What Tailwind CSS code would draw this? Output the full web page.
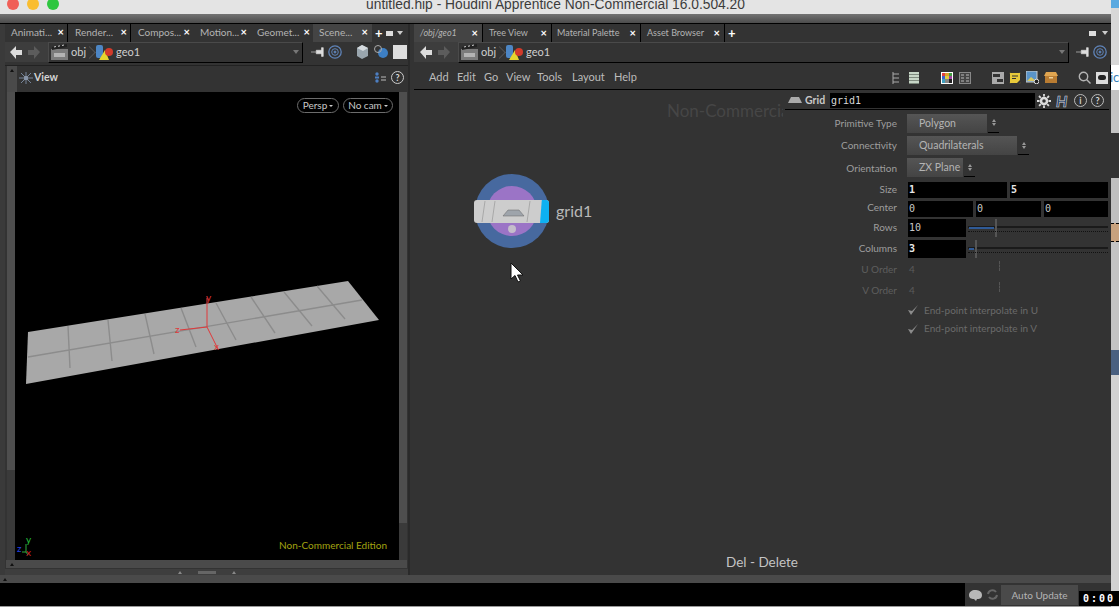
<!DOCTYPE html>
<html lang="en">
<head>
<meta charset="UTF-8">
<title>untitled.hip - Houdini Apprentice Non-Commercial 16.0.504.20</title>
<script src="https://cdn.jsdelivr.net/npm/@tailwindcss/browser@4"></script>
</head>
<body class="relative flex w-[1119px] h-[607px] overflow-hidden bg-[#333] font-['Lato',sans-serif] text-[10px] text-[#b4b4b4]">

<div class="w-[1111px] shrink-0 flex flex-col">
  <!-- mac title bar -->
  <div class="relative h-[14px] bg-[#e4e4e4] overflow-hidden">
    <div class="absolute left-[7px] -top-[2px] flex gap-[8px]">
      <span class="w-[12px] h-[12px] rounded-full bg-[#f05f57]"></span>
      <span class="w-[12px] h-[12px] rounded-full bg-[#f9bd30]"></span>
      <span class="w-[12px] h-[12px] rounded-full bg-[#2ec640]"></span>
    </div>
    <div class="text-center whitespace-nowrap text-[13.8px] leading-[10px] text-[#3c3c3c] font-['Liberation_Sans',sans-serif]">untitled.hip - Houdini Apprentice Non-Commercial 16.0.504.20</div>
  </div>
  <div class="h-[10px] bg-gradient-to-b from-[#747474] to-[#4c4c4c] border-b border-black"></div>

  <div class="flex h-[551px]">
    <!-- left pane -->
    <div class="w-[410px] shrink-0 flex flex-col border-l-[5px] border-l-[#3a3a3a] border-r-2 border-r-[#2a2a2a]">
      <div class="flex items-center h-[18px] whitespace-nowrap">
        <div class="w-[63px] h-full flex items-center justify-between pl-[6px] pr-[3px] pb-[1px] border-r border-black"><span>Animati...</span><b class="text-white text-[11px]">×</b></div>
        <div class="w-[63px] h-full flex items-center justify-between pl-[7px] pr-[3px] pb-[1px] border-r border-black"><span>Render...</span><b class="text-white text-[11px]">×</b></div>
        <div class="w-[62px] h-full flex items-center justify-between pl-[7px] pr-[3px] pb-[1px]"><span>Compos...</span><b class="text-white text-[11px]">×</b></div>
        <div class="w-[57px] h-full flex items-center justify-between pl-[7px] pr-[3px] pb-[1px]"><span>Motion...</span><b class="text-white text-[11px]">×</b></div>
        <div class="w-[63px] h-full flex items-center justify-between pl-[7px] pr-[3px] pb-[1px]"><span>Geomet...</span><b class="text-white text-[11px]">×</b></div>
        <div class="w-[59px] h-full flex items-center justify-between pl-[6px] pr-[4px] pb-[1px] bg-[#444]"><span>Scene...</span><b class="text-white text-[11px]">×</b></div>
        <span class="ml-[3px] text-white text-[13px] font-bold leading-none">+</span>
        <span class="ml-[3px] w-[7px] h-[5px] bg-[#ddd]"></span>
        <span class="ml-[4px] w-0 h-0 border-x-[3px] border-x-transparent border-t-[4px] border-t-[#ccc]"></span>
      </div>
      <!-- path row -->
      <div class="flex items-center h-[20px]">
        <div class="w-[43px] h-full bg-[#3d3d3d] flex items-center">
          <svg class="w-[38px] h-[14px] ml-[4px]" viewBox="0 0 38 14">
            <path d="M1 7l6-6v4h6v5H7v4z" fill="#dcdcdc"/><path d="M31 7l-6-6v4h-6v5h6v4z" fill="#5c5c5c"/>
          </svg>
        </div>
        <div class="w-[255px] h-[21px] shrink-0 flex items-center border border-black border-t-[#4a4a4a] border-l-[#4a4a4a] text-[#cfcfcf] text-[11px]">
          <svg class="w-[17px] h-[16px] ml-[2px]" viewBox="0 0 17 16"><rect y="5" width="17" height="11" fill="#7c7c7c"/><path d="M1 3l15-3v3L1 6z" fill="#222"/><path d="M3 3l2-.5M7 2.300l2-.5M11 1.500l2-.5" stroke="#ccc"/><rect x="3" y="9" width="11" height="4" fill="#b4b4b4"/></svg>
          <span class="ml-[3px]">obj</span>
          <span class="w-[9px] h-[9px] rotate-45 border-t border-r border-[#555] -translate-x-[1px]"></span>
          <svg class="w-[19px] h-[15px]" viewBox="0 0 19 15"><rect x="1" y="0" width="7" height="13" rx="2" fill="#4d86c4"/><path d="M4 15l6-10 4 10z" fill="#e6d52e"/><circle cx="14" cy="7" r="4" fill="#d13a2b"/></svg>
          <span class="ml-[2px]">geo1</span>
          <span class="ml-auto mr-[3px] w-0 h-0 border-x-[3px] border-x-transparent border-t-[4px] border-t-[#777]"></span>
        </div>
        <svg class="w-[14px] h-[10px] ml-[8px]" viewBox="0 0 16 10"><path d="M0 5h6M6 3h6v4H6zM12 0h2v10h-2z" fill="#ddd" stroke="#ddd" stroke-width=".7"/></svg>
        <svg class="w-[14px] h-[14px] ml-[3px]" viewBox="0 0 14 14" fill="none" stroke="#5f83b8"><circle cx="7" cy="7" r="6.200" stroke-width="1.300"/><circle cx="7" cy="7" r="3.300"/><circle cx="7" cy="7" r="1" fill="#5f83b8"/></svg>
        <svg class="w-[13px] h-[14px] ml-[14px]" viewBox="0 0 13 14"><path d="M1 3l5-3 6 3v8l-6 3-5-3z" fill="#9aa6ae"/><path d="M1 3l6 3 5-3-6-3z" fill="#d5dade"/></svg>
        <svg class="w-[15px] h-[14px] ml-[4px]" viewBox="0 0 15 14"><circle cx="10" cy="8" r="5" fill="#3d7fc4"/><circle cx="5" cy="4" r="3.500" fill="none" stroke="#aaa"/></svg>
        <span class="ml-[5px] w-[14px] h-[14px] bg-[#ddd]"></span>
      </div>
      <!-- viewer header -->
      <div class="flex h-[27px] mt-[3px] border-t border-[#222]">
        <div class="w-[10px] ml-[2px] bg-[#4a4a4a] flex justify-center pt-[3px]"><i class="w-0 h-0 border-x-[2px] border-x-transparent border-b-[3px] border-b-[#111]"></i></div>
        <div class="flex-1 flex items-center pb-[3px] pl-[2px]">
          <svg class="w-[14px] h-[12px]" viewBox="0 0 14 12"><circle cx="7" cy="6" r="2.500" fill="#8895a8"/><path d="M0 6h4M10 6h4M7 0v3M7 9v3M2 1l3 3M12 1L9 4M2 11l3-3M12 11L9 8" stroke="#76859a"/></svg>
          <span class="ml-[1px] font-bold text-[10.5px] text-[#d4d4d4]">View</span>
          <svg class="w-[12px] h-[13px] ml-auto" viewBox="0 0 12 13"><circle cx="3" cy="3" r="1.700" fill="#4d7fc2"/><circle cx="3" cy="10" r="1.700" fill="#4d7fc2"/><rect x="1" y="5.500" width="4" height="2" fill="#4d7fc2"/><path d="M7 6h5M7 9h5" stroke="#bbb"/></svg>
          <span class="ml-[5px] mr-[4px] w-[13px] h-[13px] rounded-full border border-[#ccc] text-[9px] leading-[11px] text-center font-bold text-[#ddd]">?</span>
        </div>
      </div>
      <!-- viewport -->
      <div class="flex h-[468px]">
        <div class="w-[10px] flex flex-col pl-[2px]">
          <div class="flex-1 bg-[#4e4e4e]"></div>
          <div class="h-[90px] bg-[#3a3a3a]"></div>
        </div>
        <div class="relative w-[384px] bg-black overflow-hidden">
          <div class="absolute top-[6px] right-[6px] flex gap-[4px] text-[#c8c8c8]">
            <span class="w-[42px] h-[15px] rounded-full border border-[#6c6c6c] flex items-center justify-center gap-[2px]">Persp<i class="w-0 h-0 border-x-[2px] border-x-transparent border-t-[2px] border-t-[#ccc]"></i></span>
            <span class="w-[50px] h-[15px] rounded-full border border-[#6c6c6c] flex items-center justify-center gap-[2px]">No cam<i class="w-0 h-0 border-x-[2px] border-x-transparent border-t-[2px] border-t-[#ccc]"></i></span>
          </div>
          <svg class="absolute left-0 top-0" width="384" height="468" viewBox="15 92 384 468">
            <polygon points="28,332 348,281 379,320 26,384" fill="#a8a8a8"/>
            <path d="M28 357L362 300M68 326l2 42M108 320l4 41M145 314l9 40M181 308l15 39M216 303l20 37M251 297l24 36M284 292l28 34M317 286l28 33" stroke="#8c8c8c" stroke-width="1.400" fill="none"/>
            <path d="M207 298v29M207 327l-27 3M207 327l11 22" stroke="#e0383a" fill="none"/>
            <text x="206" y="301" fill="#e0383a" font-size="10">y</text>
            <text x="175" y="333" fill="#e0383a" font-size="10">z</text>
            <text x="214" y="350" fill="#e0383a" font-size="10">x</text>
            <path d="M26 552v-8M26 552h-4M26 552l2 3" stroke="#2fae3f"/>
            <text x="26" y="543" fill="#27c13c" font-size="10">y</text>
            <text x="17" y="552" fill="#2343e6" font-size="10">z</text>
            <text x="26" y="556" fill="#d0262a" font-size="10">x</text>
          </svg>
          <span class="absolute right-[12px] bottom-[7px] text-[#a3a310]">Non-Commercial Edition</span>
        </div>
        <div class="w-[8px] flex flex-col">
          <div class="flex-1 bg-[#4e4e4e]"></div>
          <div class="h-[37px] bg-[#3a3a3a]"></div>
        </div>
      </div>
      <div class="h-[8px] w-[401px] ml-[1px] pl-[4px] bg-[#4a4a4a] flex items-center"><i class="w-0 h-0 border-x-[2px] border-x-transparent border-b-[3px] border-b-[#111]"></i></div>
      <div class="h-[6px] w-[403px] mt-[1px] bg-[#3e3e3e] flex items-center justify-center gap-[16px]"><i class="w-0 h-0 border-x-[2px] border-x-transparent border-b-[3px] border-b-[#888]"></i><span class="w-[18px] h-[3px] bg-[#666]"></span><i class="w-0 h-0 border-x-[2px] border-x-transparent border-b-[3px] border-b-[#888]"></i></div>
    </div>

    <!-- right pane -->
    <div class="w-[701px] shrink-0 flex flex-col pl-[4px]">
      <div class="flex items-center h-[18px] text-[9px] whitespace-nowrap">
        <div class="w-[69px] h-full flex items-center justify-between pl-[6px] pr-[4px] bg-[#444] italic border-r border-black"><span>/obj/geo1</span><b class="text-white text-[11px] not-italic">×</b></div>
        <div class="w-[69px] h-full flex items-center justify-between pl-[6px] pr-[4px] border-r border-black"><span>Tree View</span><b class="text-white text-[11px]">×</b></div>
        <div class="w-[89px] h-full flex items-center justify-between pl-[5px] pr-[4px] border-r border-black"><span>Material Palette</span><b class="text-white text-[11px]">×</b></div>
        <div class="w-[84px] h-full flex items-center justify-between pl-[6px] pr-[4px] border-r border-black"><span>Asset Browser</span><b class="text-white text-[11px]">×</b></div>
        <span class="ml-[3px] text-white text-[13px] font-bold leading-none">+</span>
        <span class="ml-auto w-[7px] h-[5px] bg-[#ddd]"></span>
        <span class="ml-[6px] mr-[3px] w-0 h-0 border-x-[3px] border-x-transparent border-t-[4px] border-t-[#ccc]"></span>
      </div>
      <div class="flex items-center h-[20px]">
        <div class="w-[44px] h-full bg-[#3d3d3d] flex items-center">
          <svg class="w-[38px] h-[14px] ml-[5px]" viewBox="0 0 38 14">
            <path d="M1 7l6-6v4h6v5H7v4z" fill="#dcdcdc"/><path d="M31 7l-6-6v4h-6v5h6v4z" fill="#5c5c5c"/>
          </svg>
        </div>
        <div class="w-[611px] h-[21px] shrink-0 flex items-center border border-black border-t-[#4a4a4a] border-l-[#4a4a4a] text-[#cfcfcf] text-[11px]">
          <svg class="w-[17px] h-[16px] ml-[2px]" viewBox="0 0 17 16"><rect y="5" width="17" height="11" fill="#7c7c7c"/><path d="M1 3l15-3v3L1 6z" fill="#222"/><path d="M3 3l2-.5M7 2.300l2-.5M11 1.500l2-.5" stroke="#ccc"/><rect x="3" y="9" width="11" height="4" fill="#b4b4b4"/></svg>
          <span class="ml-[3px]">obj</span>
          <span class="w-[9px] h-[9px] rotate-45 border-t border-r border-[#555] -translate-x-[1px]"></span>
          <svg class="w-[19px] h-[15px]" viewBox="0 0 19 15"><rect x="1" y="0" width="7" height="13" rx="2" fill="#4d86c4"/><path d="M4 15l6-10 4 10z" fill="#e6d52e"/><circle cx="14" cy="7" r="4" fill="#d13a2b"/></svg>
          <span class="ml-[2px]">geo1</span>
          <span class="ml-auto mr-[3px] w-0 h-0 border-x-[3px] border-x-transparent border-t-[4px] border-t-[#777]"></span>
        </div>
        <svg class="w-[14px] h-[10px] ml-[7px]" viewBox="0 0 16 10"><path d="M0 5h6M6 3h6v4H6zM12 0h2v10h-2z" fill="#ddd" stroke="#ddd" stroke-width=".7"/></svg>
        <svg class="w-[14px] h-[14px] ml-[3px]" viewBox="0 0 14 14" fill="none" stroke="#5f83b8"><circle cx="7" cy="7" r="6.200" stroke-width="1.300"/><circle cx="7" cy="7" r="3.300"/><circle cx="7" cy="7" r="1" fill="#5f83b8"/></svg>
      </div>
      <!-- menu row -->
      <div class="flex items-center h-[25px] mt-[3px] pl-[15px] pt-[1px] border-b border-r border-black text-[11px] text-[#bcbcbc]">
        <span class="w-[28px]">Add</span><span class="w-[27px]">Edit</span><span class="w-[22px]">Go</span><span class="w-[31px]">View</span><span class="w-[35px]">Tools</span><span class="w-[42px]">Layout</span><span>Help</span>
        <div class="ml-auto flex items-center mr-[2px]">
          <svg class="w-[8px] h-[12px]" viewBox="0 0 8 12" fill="none" stroke="#aaa"><path d="M1 0v12M1 2h6M1 6h6M1 10h6"/></svg>
          <span class="ml-[9px] w-[10px] h-[12px] bg-[repeating-linear-gradient(#c7d6c7_0_2px,#7e8a7e_2px_3px)]"></span>
          <span class="ml-[22px] w-[12px] h-[12px] grid grid-cols-3 bg-white p-[1px]"><i class="bg-[#e04040]"></i><i class="bg-[#e0a030]"></i><i class="bg-[#40a040]"></i><i class="bg-[#4060d0]"></i><i class="bg-[#e0d040]"></i><i class="bg-[#a040a0]"></i><i class="bg-[#40a0c0]"></i><i class="bg-[#888]"></i><i class="bg-[#222]"></i></span>
          <svg class="ml-[6px] w-[12px] h-[12px]" viewBox="0 0 12 12"><rect x=".5" y=".5" width="11" height="11" fill="#444" stroke="#888"/><path d="M2 3h3M7 3h3M2 6h3M7 6h3M2 9h3M7 9h3" stroke="#bbb"/></svg>
          <svg class="ml-[21px] w-[12px] h-[12px]" viewBox="0 0 12 12"><rect width="12" height="12" fill="#aaa"/><rect x="1" y="2" width="7" height="3" fill="#333"/><rect x="5" y="7" width="6" height="3" fill="#333"/></svg>
          <svg class="ml-[5px] w-[12px] h-[12px]" viewBox="0 0 12 12"><rect x=".5" y=".5" width="11" height="11" rx="1" fill="#e8c93a" stroke="#333"/><path d="M3 4h6M3 6.500h4" stroke="#333"/><path d="M8 11l3-3v3z" fill="#333"/></svg>
          <svg class="ml-[5px] w-[13px] h-[13px]" viewBox="0 0 13 13"><rect width="11" height="11" fill="#5a94c8" stroke="#ccc"/><path d="M1 10l4-4 5 4z" fill="#d8c860"/><circle cx="10.500" cy="10.500" r="2.300" fill="#222" stroke="#ddd"/></svg>
          <svg class="ml-[5px] w-[14px] h-[11px]" viewBox="0 0 14 11"><rect x="1" y="3" width="12" height="8" fill="#b97c32"/><path d="M2 0h10l2 4H0z" fill="#e0a550"/><rect x="5" y="5" width="4" height="1.500" fill="#ecd09a"/></svg>
          <svg class="w-[13px] h-[13px] ml-[20px]" viewBox="0 0 13 13" fill="none" stroke="#b4b4b4" stroke-width="1.400"><circle cx="5.500" cy="5.500" r="4.200"/><path d="M8.500 8.500L12.500 12.500"/></svg>
          <span class="ml-[5px] w-[12px] h-[12px] bg-[#ddd] flex items-center justify-center"><i class="w-[8px] h-[5px] rounded-full bg-[#222]"></i></span>
        </div>
      </div>

      <div class="relative flex-1">
        <!-- network canvas -->
        <span class="absolute left-[253px] top-[11px] w-[116px] overflow-hidden whitespace-nowrap text-[17px] leading-[20px] text-[#464646]">Non-Commercial Edition</span>
        <div class="absolute left-[61px] top-[84px] flex items-center">
          <div class="relative w-[74px] h-[74px] rounded-full bg-[#47699f]">
            <div class="absolute left-[12px] top-[12px] w-[50px] h-[50px] rounded-full bg-[#9b74c6]"></div>
            <div class="absolute left-[-1px] top-[26px] w-[75px] h-[23px] rounded-[3px] bg-[#cdcdcd] overflow-hidden">
              <span class="absolute right-0 top-0 h-full w-[9px] bg-[#0db1f2] [clip-path:polygon(20%_0,100%_0,100%_100%,0_100%)]"></span>
              <svg class="absolute left-0 top-0" width="75" height="23" viewBox="0 0 75 23" fill="none" stroke="#a8a8a8"><path d="M11 1L8 22M21 1l-3 21M56 1l-3 21"/><path d="M29 16l5-6h11l5 6z" fill="#9ea4ab" stroke="#666" stroke-width=".5"/></svg>
            </div>
            <div class="absolute left-[33px] top-[51px] w-[8px] h-[8px] rounded-full bg-[#c4bdcb]"></div>
          </div>
          <span class="ml-[7px] text-[16px] text-[#b9b9b9]">grid1</span>
        </div>
        <svg class="absolute left-[96px] top-[172px]" width="14" height="21" viewBox="0 0 14 21"><path d="M1 1v16l4-3.500 3 6.500 2.500-1-3-6h5.500z" fill="#fff" stroke="#111"/></svg>
        <span class="absolute left-0 bottom-[3px] w-[696px] text-center text-[13.500px] text-[#c4c4c4]">Del - Delete</span>

        <!-- parameter panel -->
        <div class="absolute left-[371px] top-[2px] w-[324px] flex flex-col">
          <div class="flex items-center h-[18px] border-b border-black">
            <svg class="w-[14px] h-[7px] ml-[3px]" viewBox="0 0 14 7"><path d="M3 0h8l3 6H0z" fill="#aaa"/></svg>
            <span class="ml-[3px] w-[25px] font-bold text-[10.500px] text-[#c8c8c8]">Grid</span>
            <div class="w-[205px] h-[15px] bg-black pl-[1px] font-['DejaVu_Sans_Mono',monospace] text-[10px] leading-[15px] text-[#d8d8d8]">grid1</div>
            <svg class="w-[14px] h-[14px] ml-[2px]" viewBox="0 0 14 14"><circle cx="7" cy="7" r="3" fill="none" stroke="#ddd" stroke-width="2.500"/><path d="M7 0v14M0 7h14M2 2l10 10M12 2L2 12" stroke="#ddd" stroke-width="1.800" stroke-dasharray="2.500 9 2.500"/></svg>
            <span class="ml-[5px] w-[14px] text-[16px] leading-[14px] font-bold italic text-[#1f3b66] [-webkit-text-stroke:0.6px_#d8d8d8]">H</span>
            <span class="ml-[4px] w-[13px] h-[13px] rounded-full border border-[#bbb] text-[9px] leading-[11px] text-center font-bold text-[#ccc]">i</span>
            <span class="ml-[4px] w-[13px] h-[13px] rounded-full border border-[#bbb] text-[9px] leading-[11px] text-center font-bold text-[#ddd]">?</span>
          </div>
          <div class="grid grid-cols-[112px_1fr] items-center mt-[2px] text-[#9e9e9e]">
            <div class="h-[22px] leading-[22px] text-right">Primitive Type</div>
            <div class="ml-[10px] flex items-center h-[22px] text-[10.500px]"><span class="w-[80px] h-[19px] pl-[12px] leading-[19px] bg-gradient-to-b from-[#555] to-[#444] text-[#b4b4b4]">Polygon</span><span class="ml-[1px] w-[11px] h-[19px] border-b border-black flex flex-col items-center justify-center gap-[1px]"><i class="w-0 h-0 border-x-[2px] border-x-transparent border-b-[3px] border-b-[#999]"></i><i class="w-0 h-0 border-x-[2px] border-x-transparent border-t-[3px] border-t-[#999]"></i></span></div>
            <div class="h-[23px] leading-[23px] text-right">Connectivity</div>
            <div class="ml-[10px] flex items-center h-[23px] text-[10.500px]"><span class="w-[110px] h-[19px] pl-[12px] leading-[19px] bg-gradient-to-b from-[#555] to-[#444] text-[#b4b4b4]">Quadrilaterals</span><span class="ml-[1px] w-[11px] h-[19px] border-b border-black flex flex-col items-center justify-center gap-[1px]"><i class="w-0 h-0 border-x-[2px] border-x-transparent border-b-[3px] border-b-[#999]"></i><i class="w-0 h-0 border-x-[2px] border-x-transparent border-t-[3px] border-t-[#999]"></i></span></div>
            <div class="h-[23px] leading-[22px] text-right">Orientation</div>
            <div class="ml-[10px] flex items-start pt-[1px] h-[23px] text-[10.500px]"><span class="w-[56px] h-[19px] pl-[12px] leading-[19px] bg-gradient-to-b from-[#555] to-[#444] text-[#b4b4b4]">ZX Plane</span><span class="ml-[1px] w-[11px] h-[19px] border-b border-black flex flex-col items-center justify-center gap-[1px]"><i class="w-0 h-0 border-x-[2px] border-x-transparent border-b-[3px] border-b-[#999]"></i><i class="w-0 h-0 border-x-[2px] border-x-transparent border-t-[3px] border-t-[#999]"></i></span></div>

            <div class="h-[20px] leading-[18px] text-right">Size</div>
            <div class="ml-[11px] flex gap-[3px] font-['DejaVu_Sans_Mono',monospace] font-bold text-[#e8e8e8]"><span class="w-[99px] h-[16px] pl-[1px] bg-black leading-[16px]">1</span><span class="w-[98px] h-[16px] pl-[1px] bg-black leading-[16px]">5</span></div>
            <div class="h-[17px] leading-[15px] text-right">Center</div>
            <div class="ml-[11px] flex gap-[3px] font-['DejaVu_Sans_Mono',monospace] text-[#c8c8c8]"><span class="w-[65px] h-[16px] pl-[1px] bg-black leading-[16px]">0</span><span class="w-[65px] h-[16px] pl-[1px] bg-black leading-[16px]">0</span><span class="w-[64px] h-[16px] pl-[1px] bg-black leading-[16px]">0</span></div>
            <div class="h-[21px] leading-[21px] text-right">Rows</div>
            <div class="ml-[11px] flex items-center"><span class="w-[58px] h-[18px] pl-[1px] bg-black leading-[18px] font-['DejaVu_Sans_Mono',monospace] text-[#c8c8c8]">10</span>
              <div class="relative ml-[2px] w-[140px] h-[18px]"><i class="absolute left-0 right-0 top-[7px] h-[2px] bg-[#1a1a1a]"></i><i class="absolute left-[1px] top-[8px] w-[25px] h-[2px] bg-[#2f5a96]"></i><i class="absolute left-[27px] top-0 w-[2px] h-[18px] bg-[#555]"></i><i class="absolute left-0 right-0 top-[12px] border-t border-dotted border-[#111]"></i></div>
            </div>
            <div class="h-[21px] leading-[21px] text-right">Columns</div>
            <div class="ml-[11px] flex items-center"><span class="w-[58px] h-[18px] pl-[1px] bg-black leading-[18px] font-['DejaVu_Sans_Mono',monospace] font-bold text-[#e8e8e8]">3</span>
              <div class="relative ml-[2px] w-[140px] h-[18px]"><i class="absolute left-0 right-0 top-[7px] h-[2px] bg-[#1a1a1a]"></i><i class="absolute left-[1px] top-[8px] w-[5px] h-[2px] bg-[#2f5a96]"></i><i class="absolute left-[7px] top-0 w-[2px] h-[18px] bg-[#555]"></i><i class="absolute left-0 right-0 top-[12px] border-t border-dotted border-[#111]"></i></div>
            </div>
            <div class="h-[21px] leading-[21px] text-right text-[#5e5e5e]">U Order</div>
            <div class="ml-[11px] pl-[1px] text-[#5a5a5a] relative h-[21px] leading-[21px]">4<i class="absolute left-[91px] top-[2px] h-[10px] border-l border-dashed border-[#555]"></i></div>
            <div class="h-[21px] leading-[21px] text-right text-[#5e5e5e]">V Order</div>
            <div class="ml-[11px] pl-[1px] text-[#5a5a5a] relative h-[21px] leading-[21px]">4<i class="absolute left-[91px] top-[2px] h-[10px] border-l border-dashed border-[#555]"></i></div>
            <div></div>
            <div class="ml-[11px] flex items-center h-[18px] text-[#6a6a6a]"><svg class="w-[10px] h-[10px]" viewBox="0 0 10 10"><path d="M0 5l3 5 7-10-6 6z" fill="#8c8c8c"/></svg><span class="ml-[6px]">End-point interpolate in U</span></div>
            <div></div>
            <div class="ml-[11px] flex items-center h-[19px] text-[#6a6a6a]"><svg class="w-[10px] h-[10px]" viewBox="0 0 10 10"><path d="M0 5l3 5 7-10-6 6z" fill="#8c8c8c"/></svg><span class="ml-[6px]">End-point interpolate in V</span></div>
          </div>
        </div>
      </div>
    </div>
  </div>

  <!-- status bar -->
  <div class="flex h-[32px] bg-black border-b border-[#999]">
    <div class="flex-1 flex flex-col">
      <div class="h-[8px] bg-[#4a4a4a] pl-[3px] flex items-center"><i class="w-0 h-0 border-x-[2px] border-x-transparent border-b-[3px] border-b-[#111]"></i></div>
    </div>
    <div class="w-[146px] flex flex-col">
      <div class="h-[8px] bg-[#4a4a4a]"></div>
      <div class="flex items-center h-[23px] bg-[#333]">
        <svg class="w-[15px] h-[12px] ml-[3px]" viewBox="0 0 15 12"><path d="M1 6c0-3 3-5 6-5s7 1 7 5-3 4-5 4l-1 2-2-2C3 10 1 9 1 6z" fill="#b8b8b8"/></svg>
        <svg class="w-[13px] h-[13px] ml-[3px]" viewBox="0 0 13 13" fill="none" stroke="#666" stroke-width="2"><path d="M2 6a4.500 4.500 0 0 1 8-2M11 7a4.500 4.500 0 0 1-8 2"/></svg>
        <span class="ml-[2px] w-[77px] h-[20px] bg-[#4a4a4a] text-center leading-[20px] text-[#b4b4b4]">Auto Update</span>
      </div>
    </div>
  </div>
</div>

<!-- edge of the window behind -->
<div class="flex-1 flex flex-col bg-[#d2d2d2] overflow-hidden">
  <div class="h-[8px] bg-[#5aa9e0]"></div>
  <div class="h-[57px] bg-[#d8d8d8]"></div>
  <div class="h-[25px] bg-white text-[13px] leading-[25px] text-[#3c7fb8] whitespace-nowrap -indent-[1px]">ic</div>
  <div class="h-[43px] bg-[#c4c4c4]"></div>
  <div class="h-[45px] bg-[#333]"></div>
  <div class="h-[45px] bg-[#c0c0c0]"></div>
  <div class="h-[19px] bg-[#c8a27e] border-y border-dashed border-black"></div>
  <div class="h-[108px] bg-[#c4c4c4]"></div>
  <div class="h-[25px] bg-[#4a6080]"></div>
</div>

<!-- timer overlay -->
<div class="absolute left-[1079px] top-[591px] w-[40px] h-[15px] bg-black text-white text-center font-['DejaVu_Sans_Mono',monospace] font-bold text-[10px] leading-[15px] tracking-[2px]">0:00</div>

</body>
</html>
